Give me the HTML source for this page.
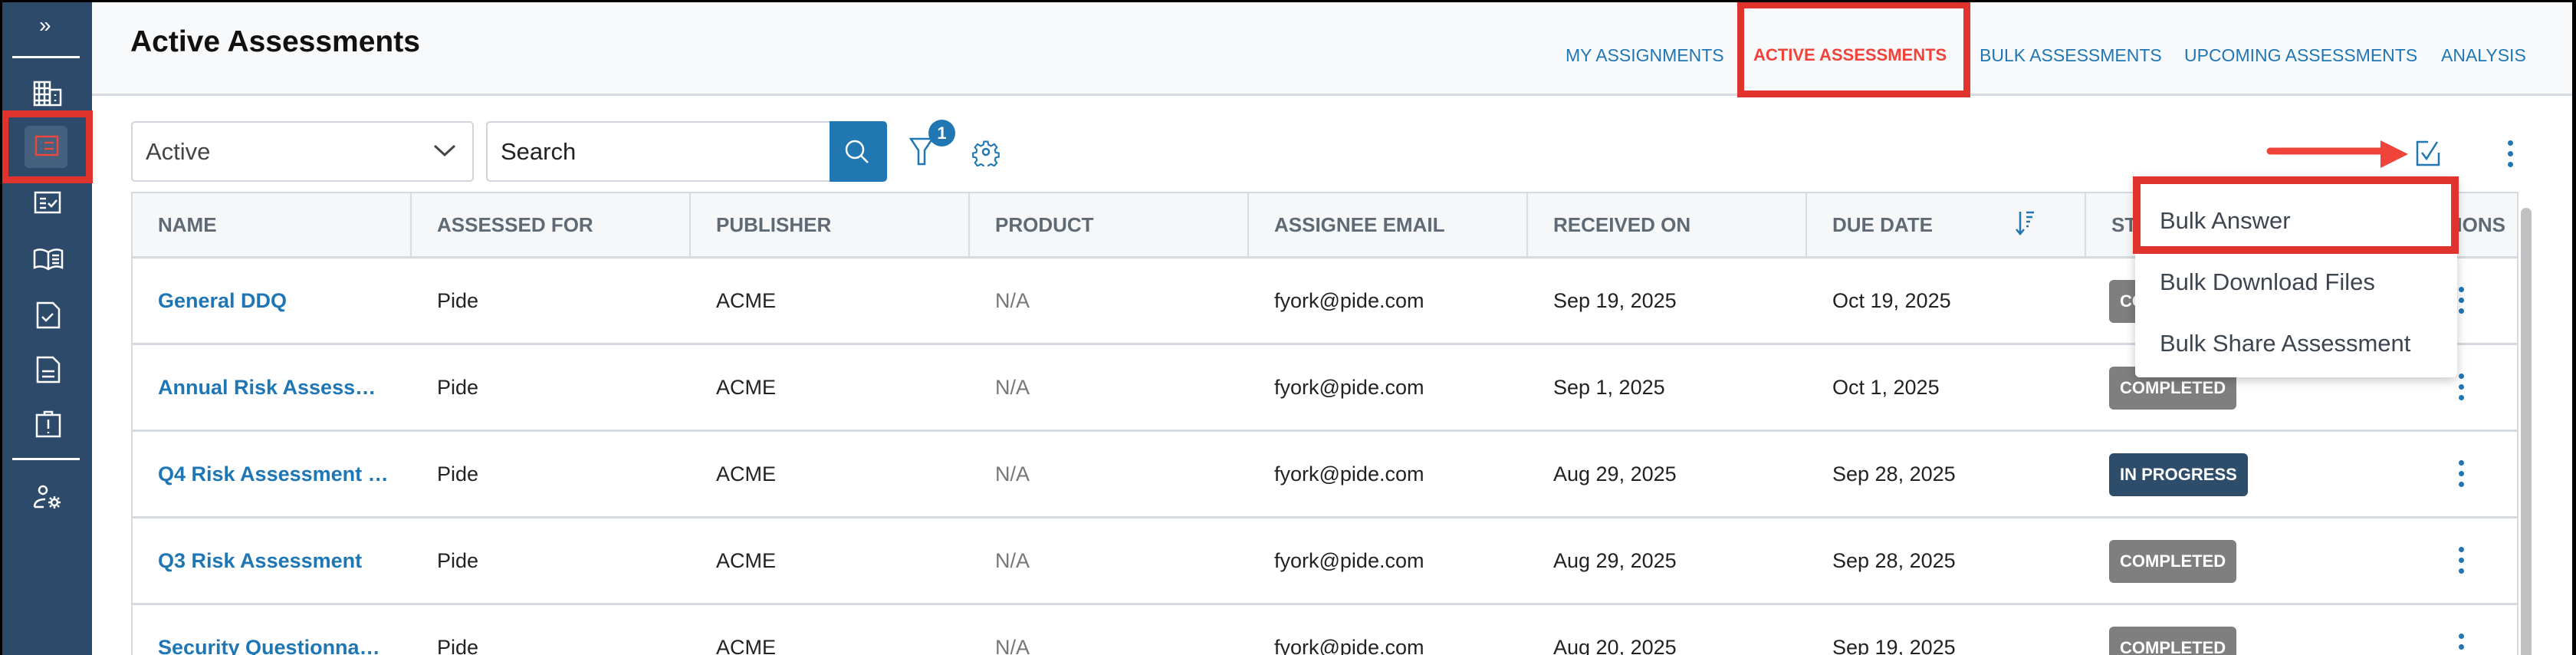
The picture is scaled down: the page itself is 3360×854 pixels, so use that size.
<!DOCTYPE html>
<html><head><meta charset="utf-8"><style>
*{margin:0;padding:0;box-sizing:border-box}
html,body{width:3360px;height:854px;overflow:hidden}
body{background:#000;font-family:"Liberation Sans",sans-serif;position:relative}
.frame{position:absolute;left:3px;top:3px;width:3352px;height:851px;background:#fff;overflow:hidden}
.abs{position:absolute}
.side{left:0;top:0;width:117px;height:851px;background:#2e4a6a}
.hdr{left:117px;top:0;width:3235px;height:122px;background:#f8f9fb;border-bottom:3px solid #d5dbe1}
.tab{position:absolute;top:56px;font-size:23px;color:#1f76b4;white-space:nowrap}
.th{position:absolute;top:0;height:82px;line-height:82px;font-size:26px;font-weight:bold;color:#5f6a75;padding-left:33px;border-right:2px solid #d5dbe1;background:#f6f7f9}
.row{position:absolute;left:0;width:3110px;border-bottom:3px solid #d5dbe1;height:113px}
.cell{position:absolute;top:0;line-height:110px;font-size:27px;color:#222;padding-left:33px;white-space:nowrap}
.name{color:#1f76b4;font-weight:bold;font-size:27px}
.na{color:#777}
.badge{position:absolute;left:2578px;top:28px;height:56px;line-height:56px;padding:0 14px;border-radius:6px;color:#fff;font-size:22px;font-weight:bold;background:#7f7f7f}
.kb{position:absolute;left:3034px;top:37px;width:7px}
.kb i{display:block;width:7px;height:7px;border-radius:50%;background:#1f76b4;margin-bottom:7px}
.mi{position:absolute;left:32px;font-size:31px;color:#3d4650}
</style></head><body><div class="frame">
<div class="abs side">
<div class="abs" style="left:48px;top:14px;color:#fff;font-size:28px">»</div>
<div class="abs" style="left:13px;top:70px;width:88px;height:3px;background:#fff"></div>
<svg class="abs" style="left:40px;top:102px" width="40" height="34" viewBox="0 0 40 34" fill="none" stroke="#fff" stroke-width="2.5"><rect x="2" y="2" width="20" height="30"/><rect x="22" y="12" width="14" height="20"/><path d="M8 2v30M15 2v30M2 10h20M2 18h20M2 26h20M29 18v2M29 25v2"/></svg>
<div class="abs" style="left:29px;top:161px;width:56px;height:55px;background:#46617e;border-radius:6px"></div>
<svg class="abs" style="left:42px;top:172px" width="32" height="32" viewBox="0 0 32 32" fill="none" stroke="#e8493c" stroke-width="2.5"><rect x="2" y="3" width="28" height="24"/><path d="M8 11h1M13 11h12M8 19h1M13 19h12"/></svg>
<div class="abs" style="left:-1px;top:141px;width:119px;height:95px;border:9px solid #e0332e"></div>
<svg class="abs" style="left:41px;top:246px" width="36" height="32" viewBox="0 0 36 32" fill="none" stroke="#fff" stroke-width="2.5"><rect x="2" y="2" width="32" height="26"/><path d="M8 10h8M8 16h8M8 22h8M19 16l4 4 7-8"/></svg>
<svg class="abs" style="left:40px;top:318px" width="40" height="32" viewBox="0 0 40 32" fill="none" stroke="#fff" stroke-width="2.5"><path d="M2 6q9-4 18 2q9-6 18-2v22q-9-4-18 2q-9-6-18-2z M20 8v22M25 12h9M25 17h9M25 22h9"/></svg>
<svg class="abs" style="left:44px;top:390px" width="32" height="36" viewBox="0 0 32 36" fill="none" stroke="#fff" stroke-width="2.5"><path d="M2 2h20l8 8v24H2z M8 20l5 5 9-9"/></svg>
<svg class="abs" style="left:44px;top:461px" width="32" height="36" viewBox="0 0 32 36" fill="none" stroke="#fff" stroke-width="2.5"><path d="M2 2h20l8 8v24H2z M8 20h16M8 27h16"/></svg>
<svg class="abs" style="left:43px;top:532px" width="34" height="36" viewBox="0 0 34 36" fill="none" stroke="#fff" stroke-width="2.5"><rect x="2" y="6" width="30" height="28"/><path d="M12 6V2h10v4M17 12v12M17 28v2"/></svg>
<div class="abs" style="left:13px;top:594px;width:88px;height:3px;background:#fff"></div>
<svg class="abs" style="left:40px;top:628px" width="38" height="34" viewBox="0 0 38 34" fill="none" stroke="#fff" stroke-width="2.5"><circle cx="13" cy="8" r="5"/><path d="M2 30q0-10 14-10M2 30h12"/><circle cx="28" cy="24" r="4"/><path d="M28 16v3M28 29v3M20 24h3M33 24h3M22 18l2 2M32 28l2 2M34 18l-2 2M22 30l2-2"/></svg>
</div>
<div class="abs hdr">
<div class="abs" style="left:50px;top:30px;font-size:39px;font-weight:bold;color:#111">Active Assessments</div>
</div>
<div class="tab" style="left:2039px">MY ASSIGNMENTS</div>
<div class="tab" style="left:2284px;color:#f0433a;font-weight:bold;font-size:22px">ACTIVE ASSESSMENTS</div>
<div class="abs" style="left:2263px;top:-1px;width:304px;height:125px;border:9px solid #e0332e"></div>
<div class="tab" style="left:2579px">BULK ASSESSMENTS</div>
<div class="tab" style="left:2846px">UPCOMING ASSESSMENTS</div>
<div class="tab" style="left:3181px">ANALYSIS</div>

<div class="abs" style="left:168px;top:155px;width:447px;height:79px;border:2px solid #cfd5db;border-radius:5px">
<div class="abs" style="left:17px;top:20px;font-size:31px;color:#444">Active</div>
<svg class="abs" style="left:392px;top:26px" width="30" height="20" viewBox="0 0 30 20" fill="none" stroke="#444" stroke-width="3"><path d="M2 4l13 12L28 4"/></svg>
</div>
<div class="abs" style="left:631px;top:155px;width:452px;height:79px;border:2px solid #cfd5db;border-right:none;border-radius:5px 0 0 5px">
<div class="abs" style="left:17px;top:20px;font-size:31px;color:#222">Search</div>
</div>
<div class="abs" style="left:1079px;top:155px;width:75px;height:79px;background:#2077b2;border-radius:0 5px 5px 0">
<svg class="abs" style="left:18px;top:22px" width="36" height="36" viewBox="0 0 36 36" fill="none" stroke="#fff" stroke-width="2.5"><circle cx="15" cy="15" r="11"/><path d="M23 23l9 9"/></svg>
</div>
<svg class="abs" style="left:1183px;top:176px" width="32" height="38" viewBox="0 0 32 38" fill="none" stroke="#2077b2" stroke-width="2.5"><path d="M2 2h28L20 17v18h-8V17z"/></svg>
<div class="abs" style="left:1208px;top:153px;width:35px;height:35px;border-radius:50%;background:#2077b2;color:#fff;font-weight:bold;font-size:22px;text-align:center;line-height:35px">1</div>
<svg class="abs" style="left:1264px;top:176px" width="38" height="38" viewBox="0 0 38 38" fill="none" stroke="#2077b2" stroke-width="2.5"><circle cx="19" cy="19" r="4"/><path d="M16 3h6l1 5 4 2 5-3 4 5-3 4 1 4 5 1v6l-5 1-1 4 3 4-4 5-5-3-4 2-1 5h-6l-1-5-4-2-5 3-4-5 3-4-1-4-5-1v-6l5-1 1-4-3-4 4-5 5 3 4-2z" transform="translate(3 3) scale(.84)"/></svg>

<svg class="abs" style="left:2952px;top:180px" width="190" height="36" viewBox="0 0 190 36"><path d="M6 14h150" stroke="#f0433a" stroke-width="9" stroke-linecap="round"/><path d="M150 0l36 18-36 18z" fill="#f0433a"/></svg>
<svg class="abs" style="left:3146px;top:178px" width="40" height="38" viewBox="0 0 40 38" fill="none" stroke="#2077b2" stroke-width="2.5"><path d="M18 4H4v30h28V18"/><path d="M10 18l6 8 14-22"/></svg>
<div class="kb" style="left:3268px;top:180px"><i></i><i></i><i></i></div>

<div class="abs" style="left:168px;top:247px;width:3114px;height:604px;border:2px solid #d5dbe1;border-bottom:none;overflow:hidden">
<div class="th" style="left:0;width:364px">NAME</div>
<div class="th" style="left:364px;width:364px">ASSESSED FOR</div>
<div class="th" style="left:728px;width:364px">PUBLISHER</div>
<div class="th" style="left:1092px;width:364px">PRODUCT</div>
<div class="th" style="left:1456px;width:364px">ASSIGNEE EMAIL</div>
<div class="th" style="left:1820px;width:364px">RECEIVED ON</div>
<div class="th" style="left:2184px;width:364px">DUE DATE
<svg class="abs" style="left:272px;top:22px" width="28" height="34" viewBox="0 0 28 34" fill="none" stroke="#2077b2" stroke-width="2.5"><path d="M6 2v28M1 25l5 6 5-6M14 3h10M14 9h8M14 15h5M14 21h3"/></svg></div>
<div class="th" style="left:2548px;width:566px;border-right:none">STATUS<span style="position:absolute;left:430px">ACTIONS</span></div>
<div style="position:absolute;left:0;top:82px;width:3114px;height:3px;background:#d5dbe1"></div>

<div class="row" style="top:85px">
<div class="cell name">General DDQ</div><div class="cell" style="left:364px">Pide</div><div class="cell" style="left:728px">ACME</div><div class="cell na" style="left:1092px">N/A</div><div class="cell" style="left:1456px">fyork@pide.com</div><div class="cell" style="left:1820px">Sep 19, 2025</div><div class="cell" style="left:2184px">Oct 19, 2025</div>
<div class="badge">COMPLETED</div><div class="kb"><i></i><i></i><i></i></div></div>
<div class="row" style="top:198px">
<div class="cell name">Annual Risk Assess…</div><div class="cell" style="left:364px">Pide</div><div class="cell" style="left:728px">ACME</div><div class="cell na" style="left:1092px">N/A</div><div class="cell" style="left:1456px">fyork@pide.com</div><div class="cell" style="left:1820px">Sep 1, 2025</div><div class="cell" style="left:2184px">Oct 1, 2025</div>
<div class="badge">COMPLETED</div><div class="kb"><i></i><i></i><i></i></div></div>
<div class="row" style="top:311px">
<div class="cell name">Q4 Risk Assessment …</div><div class="cell" style="left:364px">Pide</div><div class="cell" style="left:728px">ACME</div><div class="cell na" style="left:1092px">N/A</div><div class="cell" style="left:1456px">fyork@pide.com</div><div class="cell" style="left:1820px">Aug 29, 2025</div><div class="cell" style="left:2184px">Sep 28, 2025</div>
<div class="badge" style="background:#2e4d6b">IN PROGRESS</div><div class="kb"><i></i><i></i><i></i></div></div>
<div class="row" style="top:424px">
<div class="cell name">Q3 Risk Assessment</div><div class="cell" style="left:364px">Pide</div><div class="cell" style="left:728px">ACME</div><div class="cell na" style="left:1092px">N/A</div><div class="cell" style="left:1456px">fyork@pide.com</div><div class="cell" style="left:1820px">Aug 29, 2025</div><div class="cell" style="left:2184px">Sep 28, 2025</div>
<div class="badge">COMPLETED</div><div class="kb"><i></i><i></i><i></i></div></div>
<div class="row" style="top:537px">
<div class="cell name">Security Questionna…</div><div class="cell" style="left:364px">Pide</div><div class="cell" style="left:728px">ACME</div><div class="cell na" style="left:1092px">N/A</div><div class="cell" style="left:1456px">fyork@pide.com</div><div class="cell" style="left:1820px">Aug 20, 2025</div><div class="cell" style="left:2184px">Sep 19, 2025</div>
<div class="badge">COMPLETED</div><div class="kb"><i></i><i></i><i></i></div></div>
</div>
<div class="abs" style="left:3285px;top:268px;width:14px;height:583px;background:#c1c1c1;border-radius:7px 7px 0 0"></div>

<div class="abs" style="left:2782px;top:227px;width:420px;height:262px;background:#fff;border-radius:6px;box-shadow:0 4px 14px rgba(0,0,0,.22)">
<div class="mi" style="top:40px">Bulk Answer</div>
<div class="mi" style="top:120px">Bulk Download Files</div>
<div class="mi" style="top:200px">Bulk Share Assessment</div>
</div>
<div class="abs" style="left:2779px;top:227px;width:425px;height:101px;border:10px solid #e0332e"></div>
</div></body></html>
